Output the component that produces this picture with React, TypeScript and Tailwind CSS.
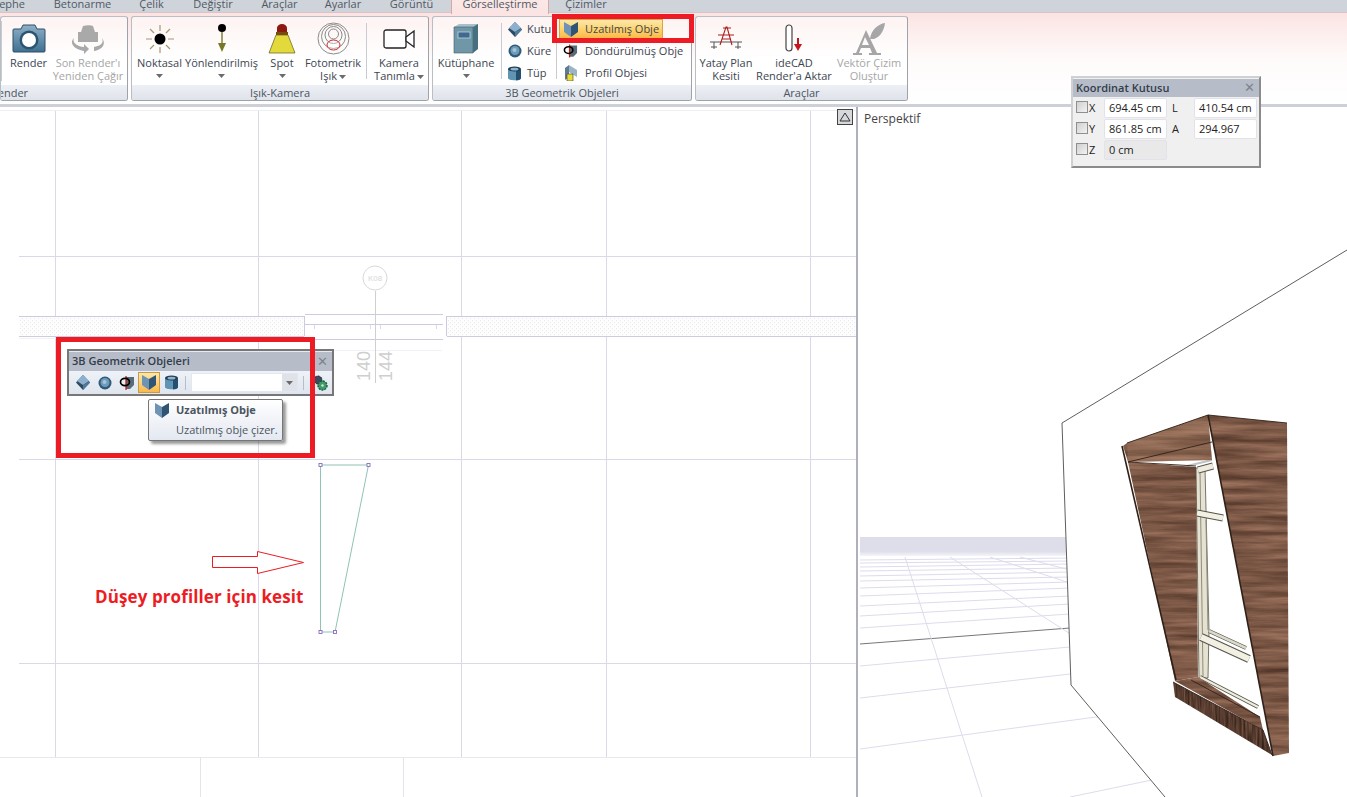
import type { ReactNode } from "react";

const tabs = [
  { label: "Cephe", w: "w-[40px] justify-end pr-[15px]" },
  { label: "Betonarme", w: "w-[85px] justify-center" },
  { label: "Çelik", w: "w-[53px] justify-center" },
  { label: "Değiştir", w: "w-[70px] justify-center" },
  { label: "Araçlar", w: "w-[63px] justify-center" },
  { label: "Ayarlar", w: "w-[64px] justify-center" },
  { label: "Görüntü", w: "w-[73px] justify-center" },
];

const Arrow = () => (
  <svg width="7" height="4" viewBox="0 0 7 4" className="inline-block align-middle">
    <path d="M0 0h7L3.5 4z" fill="#6b6b6b" />
  </svg>
);

const CameraIcon = ({ gray }: { gray?: boolean }) =>
  gray ? (
    <svg width="34" height="32" viewBox="0 0 34 32">
      <path d="M7 9h3l2-6c3-1 8-1 10 0l2 6h3v10H7z" fill="#a9a9a9" />
      <path d="M3 15c-2 5 3 8 10 9v-3l5 5-5 5v-3C5 27-3 21 3 15zM31 15c2 5-1 8-8 9v4c7-1 13-6 8-13z" fill="#a9a9a9" />
    </svg>
  ) : (
    <svg width="34" height="31" viewBox="0 0 34 31">
      <defs>
        <linearGradient id="camBody" x1="0" y1="0" x2="0" y2="1">
          <stop offset="0" stopColor="#8fb0c8" />
          <stop offset="1" stopColor="#3f7091" />
        </linearGradient>
      </defs>
      <path d="M2 6h7l2-4h12l2 4h7a1 1 0 0 1 1 1v21a1 1 0 0 1-1 1H2a1 1 0 0 1-1-1V7a1 1 0 0 1 1-1z" fill="url(#camBody)" stroke="#2f4f66" />
      <circle cx="17" cy="17" r="9.5" fill="#2c5470" />
      <circle cx="17" cy="17" r="7" fill="#fff" />
    </svg>
  );

const SunIcon = () => (
  <svg width="30" height="30" viewBox="0 0 30 30">
    <g stroke="#a39a6a" strokeWidth="1.2">
      <path d="M15 1v6M15 23v6M1 15h6M23 15h6M5 5l4 4M21 21l4 4M25 5l-4 4M9 21l-4 4" />
    </g>
    <circle cx="15" cy="15" r="5.5" fill="#000" />
  </svg>
);

const DirectionalIcon = () => (
  <svg width="14" height="30" viewBox="0 0 14 30">
    <circle cx="7" cy="4" r="4" fill="#000" />
    <path d="M7 8v12" stroke="#77772a" strokeWidth="1.4" />
    <path d="M3 19h8l-4 9z" fill="#77772a" />
  </svg>
);

const SpotIcon = () => (
  <svg width="28" height="31" viewBox="0 0 28 31">
    <path d="M9 10V5a5 4 0 0 1 10 0v5z" fill="#8c1a10" />
    <rect x="8" y="9" width="12" height="3" fill="#7a4a10" />
    <path d="M8 12h12l7 18H1z" fill="#e4d93a" stroke="#5b5b20" strokeWidth="0.7" />
  </svg>
);

const PhotometricIcon = () => (
  <svg width="33" height="33" viewBox="0 0 33 33">
    <g fill="none" stroke="#8a8a8a">
      <circle cx="16.5" cy="16.5" r="15.5" />
      <circle cx="16.5" cy="14.5" r="12" />
      <circle cx="16.5" cy="13" r="8.5" />
      <circle cx="16.5" cy="12" r="5" />
    </g>
    <ellipse cx="16.5" cy="23" rx="6.5" ry="5" fill="#fff" fillOpacity="0.3" stroke="#d02c2c" />
  </svg>
);

const VideoIcon = () => (
  <svg width="32" height="20" viewBox="0 0 32 20">
    <rect x="1" y="1" width="22" height="18" rx="2" fill="#fff" stroke="#222" strokeWidth="1.3" />
    <path d="M23 8l8-6v16l-8-6z" fill="#fff" stroke="#222" strokeWidth="1.3" />
  </svg>
);

const LibraryIcon = () => (
  <svg width="26" height="31" viewBox="0 0 26 31">
    <path d="M1 4l5-3h19v4l-24 0z" fill="#a9c0ca" />
    <path d="M1 4h19v26H1z" fill="#6f97a8" stroke="#3c5a68" strokeWidth="0.6" />
    <path d="M20 4l5-3v25l-5 4z" fill="#47707f" />
    <rect x="5" y="9" width="12" height="6" fill="#3f6a8f" stroke="#d2dde3" strokeWidth="0.7" />
  </svg>
);

const BoxIcon = () => (
  <svg width="14" height="15" viewBox="0 0 14 15">
    <path d="M7 0l7 7.5-7 7.5-7-7.5z" fill="#2d4a62" />
    <path d="M7 0l6 6-6 4-6-4z" fill="#8cb0cd" />
    <path d="M13 6.5L7 10v5l7-7.5z" fill="#507a9b" />
  </svg>
);

const SphereIcon = () => (
  <svg width="14" height="14" viewBox="0 0 14 14">
    <circle cx="7" cy="7" r="6.5" fill="#2f5a7a" />
    <circle cx="7" cy="6.5" r="4.5" fill="#6f9ab8" />
    <circle cx="6.5" cy="6" r="2" fill="#a4c4da" />
  </svg>
);

const TubeIcon = () => (
  <svg width="15" height="15" viewBox="0 0 15 15">
    <path d="M1 3v9c0 3 13 3 13 0V3z" fill="#5f94b5" />
    <path d="M9 4h5v8c0 1.5-2 2.4-5 2.6z" fill="#23506f" />
    <ellipse cx="7.5" cy="3" rx="6.5" ry="2.6" fill="#1f3e57" />
    <ellipse cx="7.5" cy="3.2" rx="4" ry="1.4" fill="#8fb3c9" />
  </svg>
);

const ExtrudeIcon = () => (
  <svg width="14" height="15" viewBox="0 0 14 15">
    <path d="M0 0l7 4v11L0 10z" fill="#6f93b2" />
    <path d="M14 0L7 4v11l7-5z" fill="#2f5474" />
  </svg>
);

const RevolveIcon = () => (
  <svg width="16" height="14" viewBox="0 0 16 14">
    <path d="M7 1h8v8l-4 4H7z" fill="#5a6b78" />
    <path d="M7 0v14" stroke="#d01818" strokeWidth="1.3" />
    <ellipse cx="6" cy="6" rx="4.5" ry="3.6" fill="none" stroke="#000" strokeWidth="1.7" />
  </svg>
);

const ProfileIcon = () => (
  <svg width="14" height="16" viewBox="0 0 14 16">
    <path d="M1 3l4-3v12l-4 3z" fill="#5e7b91" />
    <path d="M5 0l8 5v7l-8-5z" fill="#9bb3c4" />
    <path d="M3 9h6v7H3z" fill="#e8dc2e" stroke="#3a3a3a" strokeWidth="0.6" />
  </svg>
);

const PlanCutIcon = () => (
  <svg width="32" height="26" viewBox="0 0 32 26">
    <path d="M0 16h32M4 16v7M28 16v7M1 21h6M25 21h6" stroke="#555" fill="none" />
    <path d="M10 19L16 1h1l5 18M12 13h9M13 2h8M8 9h16" stroke="#b01c1c" strokeWidth="1.1" fill="none" />
  </svg>
);

const IdeRenderIcon = () => (
  <svg width="18" height="30" viewBox="0 0 18 30">
    <rect x="1" y="1" width="6" height="26" rx="3" fill="#fff" stroke="#444" strokeWidth="1.2" />
    <path d="M13 14v7" stroke="#c01818" strokeWidth="2" />
    <path d="M9 20h8l-4 7z" fill="#c8141c" />
  </svg>
);

const VectorIcon = () => (
  <svg width="34" height="34" viewBox="0 0 34 34">
    <path d="M18 17c1-9 8-15 15-16-1 8-5 14-11 16z" fill="#a6a6a6" />
    <path d="M14 8l11 23h4v2H17v-2h3l-2-5H9l-2 5h3v2H1v-2h3zM13 15l-3 8h7z" fill="#a6a6a6" />
  </svg>
);

const GearIcon = () => (
  <svg width="15" height="16" viewBox="0 0 15 16">
    <circle cx="5" cy="5" r="4" fill="#3e4a60" strokeDasharray="2 1" stroke="#20283a" />
    <circle cx="9.5" cy="10.5" r="4.5" fill="#3f9a6a" strokeDasharray="2 1" stroke="#146238" strokeWidth="1.4" />
    <circle cx="9.5" cy="10.5" r="1.2" fill="#cfe8d8" />
  </svg>
);

const Group = ({ w, label, labelClass, children }: { w: string; label: string; labelClass?: string; children: ReactNode }) => (
  <div className={`${w} h-[85px] shrink-0 flex flex-col border border-[#b9bdc4] border-r-[#9ea2a9] border-b-[#9ea2a9] rounded-[3px] overflow-hidden bg-gradient-to-b from-[#fdf3f2] via-white to-white`}>
    <div className="flex flex-1 min-h-0">{children}</div>
    <div className={`h-[15px] bg-gradient-to-b from-[#edf0f5] to-[#dfe3ea] text-center text-[11px] leading-[15px] text-[#4c5560] ${labelClass ?? ""}`}>
      {label}
    </div>
  </div>
);

const LargeButton = ({ w, icon, lines, arrow, disabled }: { w: string; icon: ReactNode; lines: string[]; arrow?: "below" | "inline"; disabled?: boolean }) => (
  <div className={`${w} shrink-0 flex flex-col items-center text-[11px] leading-[13px] whitespace-nowrap ${disabled ? "text-[#a6a6a6]" : "text-[#3c4650]"}`}>
    <div className="h-[38px] pt-[5px] flex items-center justify-center">{icon}</div>
    <div className="mt-[1px]">{lines[0]}</div>
    {lines[1] ? (
      <div>
        {lines[1]}
        {arrow === "inline" && (
          <span className="ml-[2px]">
            <Arrow />
          </span>
        )}
      </div>
    ) : (
      arrow === "below" && (
        <div className="h-[13px] flex items-center">
          <Arrow />
        </div>
      )
    )}
  </div>
);

const SmallButton = ({ icon, label, active }: { icon: ReactNode; label: string; active?: boolean }) => (
  <div className="h-[22px] flex items-center text-[11px] text-[#3c4650] whitespace-nowrap">
    <div className={`flex items-center h-[18px] pl-[3px] pr-[3px] gap-[5px] ${active ? "bg-gradient-to-b from-[#fde9a8] via-[#fdd36f] to-[#fbb948] outline outline-[#d9a441]" : ""}`}>
      <span className="w-[15px] flex justify-center">{icon}</span>
      {label}
    </div>
  </div>
);

const Sep = ({ w }: { w: string }) => (
  <div className={`${w} shrink-0 flex justify-center py-[6px]`}>
    <div className="w-px bg-[#c8ccd2]" />
  </div>
);

const Ribbon = () => (
  <div className="h-[94px] shrink-0 flex gap-[3px] pt-[3px] bg-gradient-to-b from-[#fbe4e3] via-[#fefafa] via-50% to-white border-b-[3px] border-[#cdd1d7]">
    <Group w="w-[128px]" label="Render" labelClass="text-left -ml-[10px]">
      <div className="w-[3px] shrink-0 flex py-[4px]"><div className="w-px bg-[#c8ccd2]" /></div>
      <LargeButton w="w-[49px]" icon={<CameraIcon />} lines={["Render"]} />
      <LargeButton w="w-[70px]" icon={<CameraIcon gray />} lines={["Son Render'ı", "Yeniden Çağır"]} disabled />
    </Group>
    <Group w="w-[298px]" label="Işık-Kamera">
      <LargeButton w="w-[55px]" icon={<SunIcon />} lines={["Noktasal"]} arrow="below" />
      <LargeButton w="w-[69px]" icon={<DirectionalIcon />} lines={["Yönlendirilmiş"]} arrow="below" />
      <LargeButton w="w-[52px]" icon={<SpotIcon />} lines={["Spot"]} arrow="below" />
      <LargeButton w="w-[50px]" icon={<PhotometricIcon />} lines={["Fotometrik", "Işık"]} arrow="inline" />
      <Sep w="w-[16px]" />
      <LargeButton w="w-[50px]" icon={<VideoIcon />} lines={["Kamera", "Tanımla"]} arrow="inline" />
    </Group>
    <Group w="w-[260px]" label="3B Geometrik Objeleri">
      <LargeButton w="w-[66px]" icon={<LibraryIcon />} lines={["Kütüphane"]} arrow="below" />
      <Sep w="w-[4px]" />
      <div className="w-[52px] shrink-0 pl-[1px] pt-[1px]">
        <SmallButton icon={<BoxIcon />} label="Kutu" />
        <SmallButton icon={<SphereIcon />} label="Küre" />
        <SmallButton icon={<TubeIcon />} label="Tüp" />
      </div>
      <Sep w="w-[3px]" />
      <div className="flex-1 pl-[2px] pt-[1px] [&_span]:mr-[2px]">
        <SmallButton icon={<ExtrudeIcon />} label="Uzatılmış Obje" active />
        <SmallButton icon={<RevolveIcon />} label="Döndürülmüş Obje" />
        <SmallButton icon={<ProfileIcon />} label="Profil Objesi" />
      </div>
    </Group>
    <Group w="w-[213px]" label="Araçlar">
      <LargeButton w="w-[60px]" icon={<PlanCutIcon />} lines={["Yatay Plan", "Kesiti"]} />
      <LargeButton w="w-[76px]" icon={<IdeRenderIcon />} lines={["ideCAD", "Render'a Aktar"]} />
      <LargeButton w="w-[74px]" icon={<VectorIcon />} lines={["Vektör Çizim", "Oluştur"]} disabled />
    </Group>
  </div>
);

const PlanCanvas = () => (
  <svg viewBox="0 107 856 690" className="absolute inset-0 w-full h-full" fontFamily="'Liberation Sans', sans-serif">
    <defs>
      <pattern id="hatch" width="4" height="4" patternUnits="userSpaceOnUse">
        <rect width="4" height="4" fill="#fdfdfe" />
        <rect width="1" height="1" fill="#e8e8ee" />
        <rect x="2" y="2" width="1" height="1" fill="#e8e8ee" />
      </pattern>
    </defs>
    <g stroke="#d9d9e8" fill="none" shapeRendering="crispEdges">
      {[55, 258, 461, 606, 810].map((x) => (
        <path key={x} d={`M${x + 0.5} 110V757`} />
      ))}
      {[256, 459, 663].map((y) => (
        <path key={y} d={`M19 ${y + 0.5}H856`} />
      ))}
      <path d="M0 110.5H856" stroke="#eeeef4" />
      <path d="M0 757.5H856" stroke="#e8e8ee" />
      <path d="M200.5 757V797M403.5 757V797" stroke="#e4e4ea" />
    </g>
    <g shapeRendering="crispEdges">
      <rect x="19" y="316" width="285" height="20" fill="url(#hatch)" />
      <rect x="447" y="316" width="409" height="20" fill="url(#hatch)" />
      <path d="M19 316.5H304M19 336.5H304M447 316.5H856M447 336.5H856M304.5 316V336M446.5 316V336" fill="none" stroke="#ccccdf" />
      <path d="M305 314.5H443M305 324.5H443M305 339.5H443" fill="none" stroke="#ccccdf" />
      <path d="M314.5 325V329M370.5 325V329M380.5 325V329M436.5 325V329" fill="none" stroke="#dcdce6" />
      <path d="M19 338.5H56M307 350.5H442" stroke="#f2f2f4" />
    </g>
    <circle cx="375" cy="278" r="12" fill="#fff" stroke="#dcd8d8" strokeWidth="1" />
    <text x="375" y="281" fontSize="8" fill="#d8d8d8" textAnchor="middle">K08</text>
    <path d="M375.5 291V383" stroke="#cfcfcf" />
    <text transform="translate(370 381) rotate(-90)" fontSize="18" fill="#cfcfcf">140</text>
    <text transform="translate(392 381) rotate(-90)" fontSize="18" fill="#cfcfcf">144</text>
    <path d="M320.5 465H368.5L335 632H320.5z" fill="none" stroke="#8fc3b4" />
    {[
      [320.5, 465],
      [368.5, 465],
      [335, 632],
      [320.5, 632],
    ].map(([x, y]) => (
      <rect key={`${x}-${y}`} x={x - 1.5} y={y - 1.5} width="3" height="3" fill="#fff" stroke="#8a68c4" strokeWidth="0.9" />
    ))}
    <path d="M212.5 556.5H257.5V551.5L303.5 562.5L257.5 573.5V567.5H212.5z" fill="#fff" stroke="#ed1c24" />
  </svg>
);

const floorLines = [
  [644, 628, "#77777a"], [628, 614], [616, 604], [606, 596], [596, 588], [588, 582], [581, 577], [576, 572], [571, 568], [567, 564],
  [563, 561], [560, 558], [666, 647], [698, 674],
] as [number, number, string?][];

const PerspectiveCanvas = () => (
  <svg viewBox="858 107 489 690" className="absolute inset-0 w-full h-full">
    <defs>
      <linearGradient id="horizon" x1="0" y1="0" x2="0" y2="1">
        <stop offset="0" stopColor="#dedeea" />
        <stop offset="0.75" stopColor="#dedeea" />
        <stop offset="1" stopColor="#f4f4f9" />
      </linearGradient>
      <filter id="woodH" x="0" y="0" width="100%" height="100%" colorInterpolationFilters="sRGB">
        <feTurbulence type="fractalNoise" baseFrequency="0.012 0.16" numOctaves="5" seed="7" />
        <feColorMatrix values="0.42 0 0 0 0.27 0.34 0 0 0 0.17 0.3 0 0 0 0.12 0 0 0 0 1" />
        <feComposite in2="SourceGraphic" operator="in" />
      </filter>
      <filter id="woodV" x="0" y="0" width="100%" height="100%" colorInterpolationFilters="sRGB">
        <feTurbulence type="fractalNoise" baseFrequency="0.5 0.03" numOctaves="3" seed="3" />
        <feColorMatrix values="0.45 0 0 0 0.11 0.34 0 0 0 0.06 0.28 0 0 0 0.04 0 0 0 0 1" />
        <feComposite in2="SourceGraphic" operator="in" />
      </filter>
    </defs>
    <rect x="860" y="537" width="206" height="19" fill="url(#horizon)" />
    <g stroke="#dcdcec" fill="none">
      {floorLines.map(([a, b, c]) => (
        <path key={`${a}-${b}`} d={`M860 ${a}L1070 ${b}`} stroke={c ?? "#dcdcec"} />
      ))}
      <path d="M860 749L1118 714M1070 797L1200 770" />
      <path d="M905 557L982 797M950 557L1072 635M990 557L1070 583M1020 557L1070 570" />
    </g>
    <path d="M1062 423L1360 242V797H1165L1071 685z" fill="#fff" />
    <path d="M1347 250L1062 423L1071 685L1165 797" fill="none" stroke="#5e5e5e" />

    {/* window frame seen through the reveal */}
    <path d="M1195 464L1212 458L1270 745L1197 680z" fill="#fff" />
    <polygon points="1196,468 1205,468 1209,630 1208,678 1199,678" fill="#e6e2d2" stroke="#55554a" strokeWidth="0.8" />
    <path d="M1200 470L1203 676M1206 520L1208 630" stroke="#8d8b7c" fill="none" />
    <g fill="none" strokeLinecap="butt">
      <path d="M1198 470L1213 466" stroke="#55554a" strokeWidth="7" />
      <path d="M1198 470L1213 466" stroke="#efecdf" strokeWidth="5" />
      <path d="M1197 513L1223 518" stroke="#55554a" strokeWidth="7" />
      <path d="M1197 513L1223 518" stroke="#f2efe3" strokeWidth="5" />
      <path d="M1201 637L1249 659" stroke="#55554a" strokeWidth="8" />
      <path d="M1201 637L1249 659" stroke="#f2efe3" strokeWidth="6" />
      <path d="M1209 631L1246 648" stroke="#55554a" strokeWidth="4" />
      <path d="M1209 631L1246 648" stroke="#dcd9ca" strokeWidth="2.5" />
      <path d="M1200 677L1258 707" stroke="#55554a" strokeWidth="4" />
      <path d="M1200 677L1258 707" stroke="#efecdf" strokeWidth="2.5" />
      <path d="M1187 466L1212 460" stroke="#bfc2c4" strokeWidth="2" />
    </g>

    <polygon points="1123,446 1127,443 1208,415 1212,460 1128,462" fill="#8d6650" filter="url(#woodH)" />
    <polygon points="1127,443 1208,415 1212,460 1128,462" fill="#c8a080" fillOpacity="0.22" />
    <polygon points="1128,462 1196,467 1198,677 1175,681" fill="#7a5240" filter="url(#woodH)" />
    <polygon points="1175,681 1198,677 1260,717 1263,730" fill="#7a5240" filter="url(#woodH)" />
    <polygon points="1173,682 1263,730 1272,755 1175,697" fill="#4d3226" filter="url(#woodV)" />
    <polygon points="1208,415 1287,423 1289,753 1273,756" fill="#7a5240" filter="url(#woodH)" />
    <g fill="none" stroke="#2f2018">
      <path d="M1208 415L1273 756" strokeWidth="1.6" />
      <path d="M1212 442L1128 462L1196 466" strokeWidth="0.9" />
      <path d="M1122 446L1176 680" strokeWidth="1.6" />
      <path d="M1127 443L1208 415L1287 423" strokeWidth="0.9" />
      <path d="M1191 680L1260 717" strokeWidth="0.9" />
      <path d="M1173 682L1263 730L1272 755" strokeWidth="0.9" />
    </g>
  </svg>
);

const Checkbox = () => (
  <div className="w-[12px] h-[12px] -mt-[3px] border border-[#8e8f8f] bg-gradient-to-br from-[#d0d0d0] to-[#f2f2f2]" />
);

const CoordBox = () => {
  const inputClass = "w-[63px] h-[20px] rounded-[2px] bg-white border border-[#e2e3ea] pl-[4px] leading-[18px] text-[11px] text-[#222]";
  return (
    <div className="absolute left-[1071px] top-[76px] w-[190px] h-[92px] border-[2px] border-[#8b8b8b] border-t-[#cfd0d2] border-l-[#cfd0d2] bg-[#f0f0f0] font-['Open_Sans',sans-serif] text-[11px] text-[#222]">
      <div className="h-[18px] mt-px bg-[#b6bdc9] flex items-center justify-between px-[3px] font-semibold text-[#333c4a]">
        Koordinat Kutusu
        <span className="text-[13px] font-normal text-[#7d838c] pr-[1px]">✕</span>
      </div>
      <div className="grid grid-cols-[28px_63px_27px_63px] gap-y-px pl-[3px] pt-px items-center">
        <div className="flex items-center gap-[1px]"><Checkbox />X</div>
        <div className={inputClass}>694.45 cm</div>
        <div className="pl-[5px]">L</div>
        <div className={inputClass}>410.54 cm</div>
        <div className="flex items-center gap-[1px]"><Checkbox />Y</div>
        <div className={inputClass}>861.85 cm</div>
        <div className="pl-[5px]">A</div>
        <div className={inputClass}>294.967</div>
        <div className="flex items-center gap-[1px]"><Checkbox />Z</div>
        <div className={`${inputClass} !bg-[#e9e9e9]`}>0 cm</div>
      </div>
    </div>
  );
};

const GeometryToolbar = () => (
  <div className="absolute left-[67px] top-[349px] w-[267px] h-[47px] border-[2px] border-[#777] bg-[#e6ebf3] font-['Open_Sans',sans-serif] text-[11px]">
    <div className="h-[19px] mt-px bg-[#b6bdc9] flex items-center justify-between pl-[3px] pr-[4px] font-semibold text-[#333c4a]">
      3B Geometrik Objeleri
      <span className="text-[13px] font-normal text-[#7d838c]">✕</span>
    </div>
    <div className="h-[23px] flex items-center pl-[3px] bg-gradient-to-b from-[#eef2f8] to-[#dfe5ee]">
      <span className="w-[22px] flex justify-center"><BoxIcon /></span>
      <span className="w-[22px] flex justify-center"><SphereIcon /></span>
      <span className="w-[22px] flex justify-center"><RevolveIcon /></span>
      <span className="w-[22px] h-[21px] flex items-center justify-center border border-[#c79a45] bg-gradient-to-b from-[#fbe7a8] to-[#fbb948]"><ExtrudeIcon /></span>
      <span className="w-[22px] flex justify-center"><TubeIcon /></span>
      <span className="w-px h-[14px] bg-[#b9bec6] ml-[3px] mr-[5px]" />
      <div className="w-[107px] h-[19px] bg-white border border-[#e3e7ee] flex justify-end">
        <span className="w-[15px] bg-[#dfe3e9] flex items-center justify-center"><Arrow /></span>
      </div>
      <span className="w-px h-[14px] bg-[#b9bec6] ml-[5px] mr-[9px]" />
      <GearIcon />
    </div>
  </div>
);

const Tooltip = () => (
  <div className="absolute left-[148px] top-[399px] w-[135px] h-[42px] border border-[#767676] rounded-[2px] bg-gradient-to-b from-white to-[#e4e8f1] shadow-[3px_3px_3px_rgba(0,0,0,0.4)] font-['Open_Sans',sans-serif] text-[11px] text-[#4c5560] pl-[27px] leading-[20px]">
    <span className="absolute left-[6px] top-[3px]"><ExtrudeIcon /></span>
    <div className="font-bold">Uzatılmış Obje</div>
    <div>Uzatılmış obje çizer.</div>
  </div>
);

const App = () => (
  <div className="relative w-[1347px] h-[797px] overflow-hidden bg-white flex flex-col font-['Open_Sans',sans-serif]">
    <div className="h-[13px] shrink-0 flex bg-[#cfd4db] text-[11px] leading-[8px] text-[#4f5964] border-b border-[#d9c3c4]">
      {tabs.map((tab) => (
        <div key={tab.label} className={`${tab.w} shrink-0 flex items-start whitespace-nowrap overflow-hidden`}>
          {tab.label}
        </div>
      ))}
      <div className="w-[98px] ml-[3px] h-[14px] shrink-0 text-center bg-gradient-to-b from-[#fbe8e6] to-[#fbe4e3] border-x border-[#d5a9a8] z-10">
        Görselleştirme
      </div>
      <div className="w-[68px] ml-[3px] shrink-0 text-center">Çizimler</div>
    </div>
    <Ribbon />
    <div className="flex-1 min-h-0 flex">
      <div className="relative w-[856px] shrink-0 bg-white">
        <PlanCanvas />
        <div className="absolute left-[837px] top-[2px] w-[16px] h-[16px] border border-[#444] bg-[#d6d8dc] flex items-center justify-center">
          <svg width="12" height="10" viewBox="0 0 12 10"><path d="M6 1l5 8H1z" fill="none" stroke="#333" /></svg>
        </div>
        <div className="absolute left-[95px] top-[478px] text-[17px] leading-[24px] tracking-[0.1px] font-bold text-[#ed1c24] whitespace-nowrap">
          Düşey profiller için kesit
        </div>
      </div>
      <div className="relative flex-1 border-l-[2px] border-[#aeb0bb] bg-white">
        <PerspectiveCanvas />
        <div className="absolute left-[6px] top-[3px] text-[12px] leading-[18px] text-[#444]">Perspektif</div>
      </div>
    </div>
    <CoordBox />
    <GeometryToolbar />
    <Tooltip />
    <div className="absolute left-[552px] top-[14px] w-[142px] h-[29px] border-[5px] border-[#ed1c24]" />
    <div className="absolute left-[56px] top-[337px] w-[259px] h-[121px] border-[5px] border-[#ed1c24]" />
  </div>
);

export default App;
